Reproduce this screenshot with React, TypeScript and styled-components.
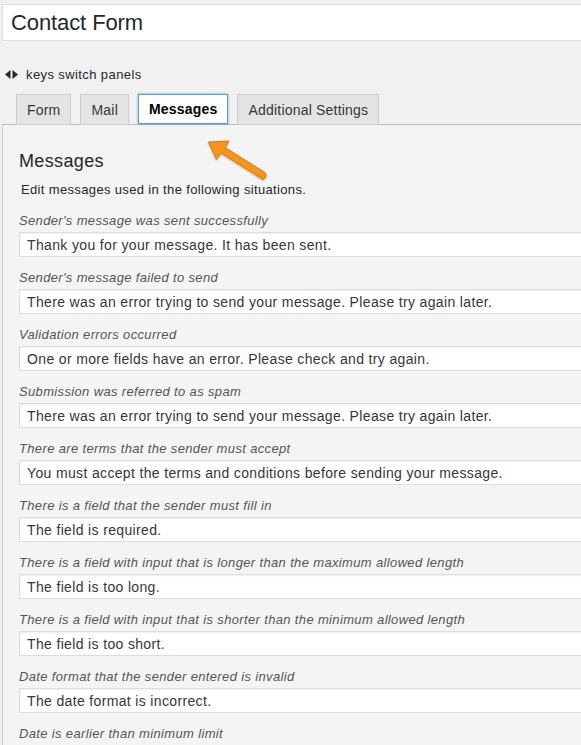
import React from 'react';
import styled, { createGlobalStyle } from 'styled-components';

const GlobalStyle = createGlobalStyle`
  html, body {
    margin: 0;
    padding: 0;
    overflow: hidden;
    background: #f1f1f1;
  }
  body {
    font-family: "Liberation Sans", Arial, sans-serif;
    color: #23282d;
    letter-spacing: 0.35px;
  }
`

const Page = styled.div`
  position: relative;
  width: 660px;
  padding: 4px 0 0 2px;
`

const TitleInput = styled.input`
  display: block;
  box-sizing: border-box;
  width: 100%;
  height: 37px;
  margin: 0;
  padding: 0 8px;
  border: 1px solid #ddd;
  background: #fff;
  font-family: inherit;
  font-size: 22px;
  letter-spacing: -0.1px;
  color: #23282d;
  outline: none;
`

const KeysHint = styled.div`
  display: flex;
  align-items: center;
  gap: 8px;
  margin-top: 25px;
  padding-left: 3px;
  height: 16px;
  font-size: 13px;
  letter-spacing: 0.4px;
  color: #23282d;
`

const TabRow = styled.div`
  display: flex;
  gap: 9px;
  margin-top: 12px;
  padding-left: 14px;
  height: 30px;
`

const Tab = styled.div<{ $active?: boolean }>`
  box-sizing: border-box;
  height: ${p => (p.$active ? '30px' : '31px')};
  padding: 0 10px;
  display: flex;
  align-items: center;
  font-size: 14px;
  letter-spacing: 0.2px;
  font-weight: ${p => (p.$active ? 700 : 400)};
  color: ${p => (p.$active ? '#000' : '#32373c')};
  background: ${p => (p.$active ? '#fdfdfd' : '#e4e4e4')};
  border: 1px solid ${p => (p.$active ? '#5b9dd9' : '#ccc')};
  box-shadow: ${p => (p.$active ? '0 0 2px rgba(30, 140, 190, 0.8)' : 'none')};
`

const Panel = styled.div`
  border-top: 1px solid #bbb;
  border-left: 1px solid #ccc;
  background: #f4f4f4;
  padding: 24px 0 20px 16px;
`

const Heading = styled.h2`
  margin: 0;
  font-size: 18px;
  line-height: 24px;
  font-weight: 400;
  color: #23282d;
`

const Description = styled.p`
  margin: 8px 0 13px 2px;
  font-size: 13px;
  line-height: 18px;
  color: #23282d;
`

const Field = styled.div`
  margin-bottom: 12px;
`

const Label = styled.label`
  display: block;
  font-size: 13px;
  line-height: 18px;
  font-style: italic;
  color: #555;
  margin-bottom: 2px;
`

const MessageInput = styled.input`
  display: block;
  box-sizing: border-box;
  width: 100%;
  height: 25px;
  margin: 0;
  padding: 0 7px;
  border: 1px solid #ddd;
  background: #fff;
  box-shadow: inset 0 1px 2px rgba(0, 0, 0, 0.07);
  font-family: inherit;
  font-size: 14px;
  letter-spacing: 0.35px;
  color: #32373c;
  outline: none;
`

const Arrow = styled.svg`
  position: absolute;
  left: 0;
  top: 0;
  pointer-events: none;
  filter: drop-shadow(0 1px 1px rgba(0, 0, 0, 0.25));
`

const messages = [
  ["Sender's message was sent successfully", 'Thank you for your message. It has been sent.'],
  ["Sender's message failed to send", 'There was an error trying to send your message. Please try again later.'],
  ['Validation errors occurred', 'One or more fields have an error. Please check and try again.'],
  ['Submission was referred to as spam', 'There was an error trying to send your message. Please try again later.'],
  ['There are terms that the sender must accept', 'You must accept the terms and conditions before sending your message.'],
  ['There is a field that the sender must fill in', 'The field is required.'],
  ['There is a field with input that is longer than the maximum allowed length', 'The field is too long.'],
  ['There is a field with input that is shorter than the minimum allowed length', 'The field is too short.'],
  ['Date format that the sender entered is invalid', 'The date format is incorrect.'],
  ['Date is earlier than minimum limit', 'The date is before the earliest one allowed.'],
]

const App = () => {
  return (
    <>
      <GlobalStyle />
      <Page>
        <TitleInput defaultValue="Contact Form" />

        <KeysHint>
          <svg width="13" height="9" viewBox="0 0 13 9">
            <path d="M0 4.5 L5.5 0 L5.5 9 Z" fill="#23282d" />
            <path d="M13 4.5 L7.5 0 L7.5 9 Z" fill="#23282d" />
          </svg>
          <span>keys switch panels</span>
        </KeysHint>

        <TabRow>
          <Tab>Form</Tab>
          <Tab>Mail</Tab>
          <Tab $active>Messages</Tab>
          <Tab>Additional Settings</Tab>
        </TabRow>

        <Panel>
          <Heading>Messages</Heading>
          <Description>Edit messages used in the following situations.</Description>
          {messages.map(([label, value], i) => (
            <Field key={i}>
              <Label>{label}</Label>
              <MessageInput defaultValue={value} />
            </Field>
          ))}
        </Panel>

        <Arrow width="300" height="200" viewBox="0 0 300 200">
          <path
            d="M208.5 142 L229 141 L225 147.5 L265 172.5 Q268 177 263 179.5 L221 153 L216.5 159.5 Z"
            fill="#f7941d"
            stroke="#d9790c"
            strokeWidth="1"
            strokeLinejoin="round"
          />
        </Arrow>
      </Page>
    </>
  );
};

export default App;
